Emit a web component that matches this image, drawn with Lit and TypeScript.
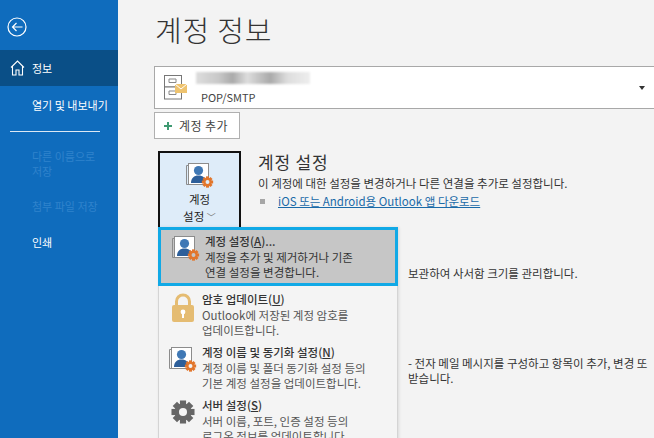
import {LitElement, css, html, svg} from 'lit'
import {customElement} from 'lit/decorators.js'

const gearPath = (cx: number, cy: number, r: number, fill: string, hole: string) => {
  const teeth = [0, 45, 90, 135].map(
    (a) => svg`<rect x=${cx - r * 0.32} y=${cy - r * 1.2} width=${r * 0.64} height=${r * 2.4} fill=${fill} transform="rotate(${a} ${cx} ${cy})" />`,
  )
  return svg`${teeth}<circle cx=${cx} cy=${cy} r=${r * 0.9} fill=${fill} /><circle cx=${cx} cy=${cy} r=${r * 0.42} fill=${hole} />`
}

const accountIcon = (hole: string) => html`<svg width="30" height="28" viewBox="0 0 30 28">
  <path d="M1.5 3.5h2M1.5 3.5v19h2" fill="none" stroke="#8c8c8c" />
  <rect x="3.5" y="1.5" width="20" height="21" fill="#fff" stroke="#8c8c8c" />
  <circle cx="13.5" cy="8.5" r="4.6" fill="#3f78b5" />
  <path d="M6 21c0-5 3-7.5 7.5-7.5s7.5 2.5 7.5 7.5z" fill="#2d5f9a" />
  ${svg`${gearPath(22.5, 20, 4.7, '#e2762c', hole)}`}
</svg>`

const lockIcon = html`<svg width="24" height="30" viewBox="0 0 24 30">
  <path d="M5.5 14V8.5a6.5 6.5 0 0 1 13 0V14" fill="none" stroke="#e5bc72" stroke-width="3" />
  <rect x="1" y="12" width="22" height="17" rx="2" fill="#e5bc72" />
  <circle cx="12" cy="19" r="2.4" fill="#fff" />
  <rect x="11" y="19" width="2" height="6" fill="#fff" />
</svg>`

const gearIcon = html`<svg width="26" height="26" viewBox="0 0 26 26">
  ${svg`${gearPath(13, 13, 9.6, '#666', '#f4f4f4')}`}
</svg>`

const mailboxIcon = html`<svg width="26" height="28" viewBox="0 0 26 28">
  <rect x="1.5" y="1.5" width="17" height="11.5" fill="#fff" stroke="#777" />
  <rect x="1.5" y="13" width="17" height="12" fill="#fff" stroke="#777" />
  <path d="M6 5h7v3.5M6 5v3.5h7M6 17h7v3.5M6 17v3.5h7" fill="none" stroke="#888" />
  <rect x="12" y="10" width="12" height="9" fill="#eec36f" />
  <path d="M12 10l6 5 6-5" fill="none" stroke="#fff" />
</svg>`

@customElement('app-root')
export class AppRoot extends LitElement {
  static styles = css`
    * {
      box-sizing: border-box;
    }

    :host {
      display: flex;
      position: relative;
      width: 654px;
      height: 438px;
      overflow: hidden;
      background: #f3f3f3;
      color: #333;
      font-family: 'Noto Sans CJK KR', 'Liberation Sans', sans-serif;
      font-size: 11.5px;
    }

    .side {
      width: 118px;
      flex: none;
      background: #0f6cbd;
      color: #fff;
      font-size: 11px;
      line-height: 15px;
    }

    .back {
      display: block;
      margin: 17px 0 0 7px;
    }

    .nav {
      padding-left: 32px;
      padding-right: 8px;
    }

    .active {
      display: flex;
      align-items: center;
      height: 36px;
      margin-top: 13px;
      padding-left: 10px;
      gap: 7px;
      background: #0a4f87;
    }

    .open {
      margin-top: 12px;
    }

    .rule {
      height: 1px;
      margin: 18px 18px 0 10px;
      background: #dbe8f4;
    }

    .off {
      color: #2f83cc;
    }

    .saveas {
      margin-top: 17px;
    }

    .attach {
      margin-top: 20px;
    }

    .print {
      margin-top: 21px;
    }

    .main {
      flex: 1;
      min-width: 0;
      padding-left: 36px;
    }

    h1 {
      margin: 8px 0 0 1px;
      font-size: 29px;
      line-height: 42px;
      font-weight: 300;
      letter-spacing: 0.8px;
      color: #333;
    }

    .acct {
      display: flex;
      align-items: center;
      height: 43px;
      margin: 16px -10px 0 0;
      padding: 0 18px 0 8px;
      background: #fff;
      border: 1px solid #a8a8a8;
    }

    .acct-text {
      margin-left: 12px;
      flex: 1;
    }

    .blur {
      width: 114px;
      height: 12px;
      margin-left: -5px;
      background: linear-gradient(90deg, #ddd, #c8c8c8 20%, #aaa 32%, #ddd 45%, #aaa 65%, #ddd 80%, #eee);
      filter: blur(1.2px);
    }

    .type {
      margin-top: 6px;
      font-size: 11px;
      line-height: 14px;
      color: #444;
    }

    .caret {
      width: 0;
      height: 0;
      border: 3px solid transparent;
      border-top: 4px solid #333;
      border-bottom: 0;
    }

    .add {
      display: flex;
      align-items: center;
      gap: 7px;
      width: 86px;
      height: 27px;
      margin-top: 3px;
      padding-left: 9px;
      background: #fff;
      border: 1px solid #b0b0b0;
      font-size: 12px;
      letter-spacing: 0.4px;
      color: #444;
    }

    .plus {
      width: 8px;
      height: 8px;
      background:
        linear-gradient(#3f9a72, #3f9a72) center / 8px 2px no-repeat,
        linear-gradient(#3f9a72, #3f9a72) center / 2px 8px no-repeat;
    }

    .section {
      display: flex;
      margin-top: 12px;
      margin-left: 4px;
    }

    .big {
      width: 83px;
      height: 82px;
      flex: none;
      display: flex;
      flex-direction: column;
      align-items: center;
      padding-top: 9px;
      background: #deecf9;
      border: 2px solid #111;
      font-size: 11.5px;
      line-height: 17px;
      color: #222;
      text-align: center;
    }

    .big svg {
      margin-bottom: 1px;
    }

    .chev {
      color: #777;
      font-size: 9px;
    }

    .info {
      margin-left: 17px;
    }

    h2 {
      margin: 0;
      font-size: 17px;
      line-height: 22px;
      font-weight: 400;
      letter-spacing: 0.8px;
    }

    .line {
      line-height: 15px;
      white-space: nowrap;
    }

    .info .line {
      margin-top: 3px;
    }

    .link {
      display: flex;
      align-items: center;
      margin-top: 3px;
      white-space: nowrap;
      line-height: 15px;
    }

    .link i {
      width: 5px;
      height: 5px;
      margin-right: 13px;
      margin-left: 2px;
      background: #a6a6a6;
    }

    .link a {
      color: #1a6aa8;
      text-decoration: underline;
    }

    .behind {
      margin-left: 254px;
      white-space: nowrap;
    }

    .b1 {
      margin-top: 33px;
    }

    .b2 {
      margin-top: 75px;
    }

    .menu {
      position: absolute;
      left: 158px;
      top: 227px;
      width: 240px;
      height: 220px;
      background: #f4f4f4;
      border-right: 1px solid #d4d4d4;
      border-left: 1px solid #d4d4d4;
      box-shadow: 1px 0 3px rgba(0, 0, 0, 0.1);
    }

    .item {
      display: flex;
      height: 53px;
      padding: 6px 0 0 5px;
      line-height: 14.5px;
      color: #555;
    }

    .item.hot {
      height: 59px;
      margin: 0 -1px 0 -1px;
      padding: 4px 0 0 6px;
      background: #c6c6c6;
      border: 3px solid #11a9e6;
      color: #333;
    }

    .ico {
      width: 37px;
      flex: none;
      display: flex;
      justify-content: center;
      padding-top: 1px;
      margin-right: 1px;
    }

    .title {
      font-weight: 500;
      color: #333;
      margin-bottom: 1.5px;
    }

    .title u {
      text-underline-offset: 1px;
    }

    .item .d {
      white-space: nowrap;
    }
  `

  render() {
    return html`
      <div class="side">
        <svg class="back" width="20" height="20" viewBox="0 0 20 20">
          <circle cx="10" cy="10" r="9" fill="none" stroke="#fff" stroke-width="1.2" />
          <path d="M15.5 10h-10M9.5 6l-4 4 4 4" fill="none" stroke="#fff" stroke-width="1.2" />
        </svg>
        <div class="active">
          <svg width="15" height="16" viewBox="0 0 15 16">
            <path d="M1 7.5L7.5 1 14 7.5M2.5 6.5V15H6v-5h3v5h3.5V6.5" fill="none" stroke="#fff" stroke-width="1.1" />
          </svg>
          <span>정보</span>
        </div>
        <div class="nav open">열기 및 내보내기</div>
        <div class="rule"></div>
        <div class="nav off saveas">다른 이름으로<br />저장</div>
        <div class="nav off attach">첨부 파일 저장</div>
        <div class="nav print">인쇄</div>
      </div>
      <div class="main">
        <h1>계정 정보</h1>
        <div class="acct">
          ${mailboxIcon}
          <div class="acct-text">
            <div class="blur"></div>
            <div class="type">POP/SMTP</div>
          </div>
          <div class="caret"></div>
        </div>
        <div class="add"><span class="plus"></span>계정 추가</div>
        <div class="section">
          <div class="big">
            ${accountIcon('#deecf9')}
            <span>계정<br />설정 <span class="chev">﹀</span></span>
          </div>
          <div class="info">
            <h2>계정 설정</h2>
            <div class="line">이 계정에 대한 설정을 변경하거나 다른 연결을 추가로 설정합니다.</div>
            <div class="link"><i></i><a>iOS 또는 Android용 Outlook 앱 다운로드</a></div>
          </div>
        </div>
        <div class="behind line b1">보관하여 사서함 크기를 관리합니다.</div>
        <div class="behind line b2">- 전자 메일 메시지를 구성하고 항목이 추가, 변경 또</div>
        <div class="behind line">받습니다.</div>
      </div>
      <div class="menu">
        <div class="item hot">
          <div class="ico">${accountIcon('#c6c6c6')}</div>
          <div>
            <div class="title">계정 설정(<u>A</u>)...</div>
            <div class="d">계정을 추가 및 제거하거나 기존</div>
            <div class="d">연결 설정을 변경합니다.</div>
          </div>
        </div>
        <div class="item">
          <div class="ico">${lockIcon}</div>
          <div>
            <div class="title">암호 업데이트(<u>U</u>)</div>
            <div class="d">Outlook에 저장된 계정 암호를</div>
            <div class="d">업데이트합니다.</div>
          </div>
        </div>
        <div class="item">
          <div class="ico">${accountIcon('#f4f4f4')}</div>
          <div>
            <div class="title">계정 이름 및 동기화 설정(<u>N</u>)</div>
            <div class="d">계정 이름 및 폴더 동기화 설정 등의</div>
            <div class="d">기본 계정 설정을 업데이트합니다.</div>
          </div>
        </div>
        <div class="item">
          <div class="ico">${gearIcon}</div>
          <div>
            <div class="title">서버 설정(<u>S</u>)</div>
            <div class="d">서버 이름, 포트, 인증 설정 등의</div>
            <div class="d">로그온 정보를 업데이트합니다.</div>
          </div>
        </div>
      </div>
    `
  }
}
